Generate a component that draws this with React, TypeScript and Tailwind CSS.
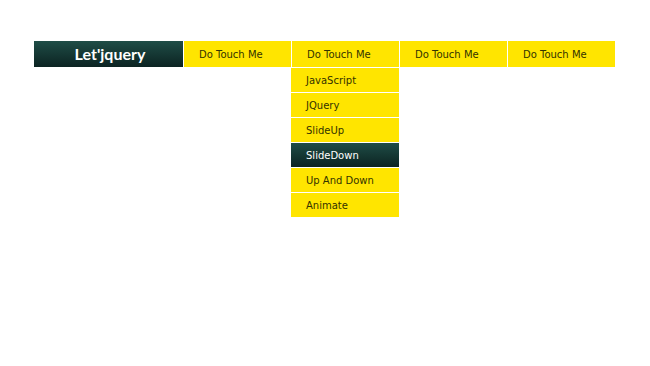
const menu = ["Do Touch Me", "Do Touch Me", "Do Touch Me", "Do Touch Me"]
const sub = ["JavaScript", "JQuery", "SlideUp", "SlideDown", "Up And Down", "Animate"]

export default function App() {
  return (
    <div className="w-[650px] h-[366px] bg-white" style={{ fontFamily: '"DejaVu Sans", Verdana, sans-serif' }}>
      {/* Nav bar */}
      <div className="flex pt-[41px] pl-[34px]">
        <div
          className="w-[149px] h-[26px] flex items-center justify-center pl-[3px] text-white text-[16px] font-bold bg-gradient-to-b from-[#1f4d47] to-[#0c2422]"
          style={{ fontFamily: 'Lato, "Liberation Sans", sans-serif' }}
        >
          Let'jquery
        </div>
        {menu.map((m, i) => (
          <div key={i} className="relative w-[108px] h-[26px] border-l border-white bg-[#ffe500]">
            <div className="h-full flex items-center pl-[15px] text-[10px] text-[#333300]">{m}</div>
            {i === 1 && (
              <div className="absolute left-[-1px] top-[26px] w-[108px] pb-[1px]">
                {sub.map((s) => (
                  <div
                    key={s}
                    className={
                      s === "SlideDown"
                        ? "h-[25px] border-t border-white flex items-center pl-[15px] pt-[1px] text-[10px] text-white bg-gradient-to-b from-[#1f4d47] to-[#0c2422]"
                        : "h-[25px] border-t border-white flex items-center pl-[15px] pt-[1px] text-[10px] text-[#333300] bg-[#ffe500]"
                    }
                  >
                    {s}
                  </div>
                ))}
              </div>
            )}
          </div>
        ))}
      </div>
    </div>
  )
}
